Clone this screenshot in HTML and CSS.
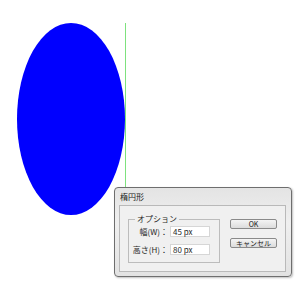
FILE: index.html
```html
<!DOCTYPE html>
<html lang="ja">
<head>
  <meta charset="UTF-8">
  <title>楕円形</title>
  <link rel="stylesheet" href="styles.css">
</head>
<body>
  <div class="canvas">
    <div class="ellipse"></div>
    <div class="guide"></div>

    <div class="dialog">
      <div class="dialog_title">楕円形</div>
      <div class="dialog_body">
        <fieldset class="options">
          <legend>オプション</legend>
          <div class="row">
            <label>幅(W)：</label>
            <div class="field">45 px</div>
          </div>
          <div class="row">
            <label>高さ(H)：</label>
            <div class="field">80 px</div>
          </div>
        </fieldset>
        <div class="buttons">
          <button type="button">OK</button>
          <button type="button">キャンセル</button>
        </div>
      </div>
    </div>
  </div>
</body>
</html>
```

FILE: styles.css
```css
* {
  box-sizing: border-box;
  padding: 0;
  margin: 0;
}

body {
  background-color: white;
  font-family: "Noto Sans CJK JP", "Liberation Sans", sans-serif;
  font-size: 8px;
  color: #1f1f1f;
}

.canvas {
  position: relative;
  width: 300px;
  height: 300px;
  overflow: hidden;
}

/* 45 x 80 の楕円 */
.ellipse {
  position: absolute;
  left: 17px;
  top: 23px;
  width: 108px;
  height: 192px;
  border-radius: 50%;
  background-color: #0000ff;
}

.guide {
  position: absolute;
  left: 125px;
  top: 23px;
  width: 1px;
  height: 166px;
  background-color: #7ee27e;
}

.dialog {
  position: absolute;
  left: 114px;
  top: 187px;
  width: 178px;
  height: 90px;
  display: flex;
  flex-direction: column;
  padding: 0 5px 4px 4px;
  border: 1px solid #6e6e6e;
  border-radius: 4px;
  background: linear-gradient(to bottom, #e4e4e4, #efefef 40%, #e2e2e2);
  box-shadow: 1px 1px 2px rgba(0, 0, 0, 0.25);
}

.dialog_title {
  height: 17px;
  line-height: 17px;
  padding-left: 1px;
  color: #202020;
}

.dialog_body {
  flex: 1;
  display: flex;
  gap: 10px;
  padding: 8px 8px 0 8px;
  border: 1px solid #b9b9b9;
  background-color: #f0f0f0;
}

.options {
  width: 92px;
  height: 49px;
  padding: 2px 9px 0 0;
  border: 1px solid #bcbcbc;
}
.options legend {
  margin-left: 6px;
  padding: 0 2px;
  line-height: 10px;
}

.row {
  display: flex;
  align-items: center;
  justify-content: flex-end;
  height: 11px;
  margin-bottom: 7px;
  white-space: nowrap;
}
.row label {
  margin-right: 2px;
}

.field {
  width: 40px;
  height: 11px;
  line-height: 10px;
  padding-left: 2px;
  border: 1px solid #d6d6d6;
  background-color: white;
}

.buttons {
  display: flex;
  flex-direction: column;
  gap: 9px;
  padding-top: 5px;
}
.buttons button {
  width: 47px;
  height: 10px;
  font-family: inherit;
  font-size: 7px;
  line-height: 8px;
  color: #202020;
  border: 1px solid #8a8a8a;
  border-radius: 2px;
  background: linear-gradient(to bottom, #f4f4f4, #dcdcdc);
}
```
